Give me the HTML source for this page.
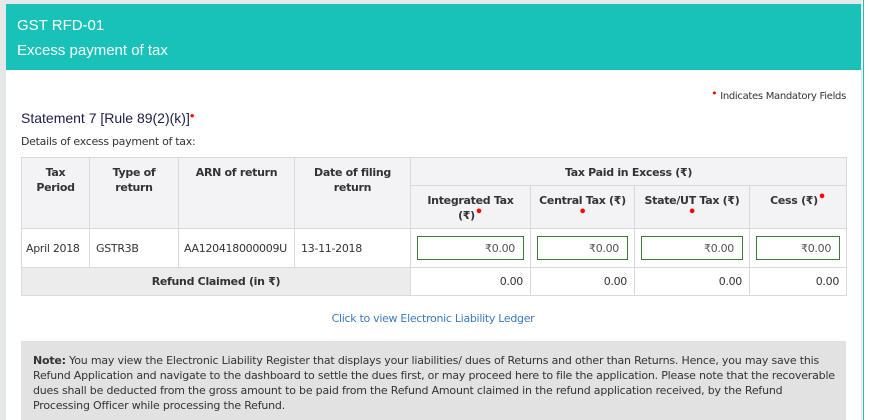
<!DOCTYPE html>
<html><head><meta charset="utf-8"><style>
*{margin:0;padding:0;box-sizing:border-box}
html,body{width:870px;height:420px;overflow:hidden}
body{background:#fff;font-family:"DejaVu Sans","Liberation Sans",sans-serif;font-size:11px;letter-spacing:-0.3px;color:#333;position:relative}
.lg{position:absolute;left:0;top:0;width:6px;height:420px;background:#e6e7e9}
.tg{position:absolute;left:0;top:0;width:862px;height:4px;background:#e6e7e9}
.rl{position:absolute;left:861px;top:0;width:1px;height:420px;background:#e6e7e9}
.tl{position:absolute;left:863px;top:0;width:1px;height:420px;background:#19c2b9}
.hd{position:absolute;left:6px;top:4px;width:855px;height:66px;background:#19c2b9;color:#fff;font-family:"Liberation Sans",sans-serif;font-size:15px;letter-spacing:0}
.hd div{position:absolute;left:11px}
.dot{color:#f00;font-size:13px;position:relative;top:-3px}
.mand{position:absolute;right:24px;top:89px;font-size:10px;color:#333}
.st{position:absolute;left:21px;top:110px;font-family:"Liberation Sans",sans-serif;font-size:14px;color:#1d1d4a;letter-spacing:0}
.det{position:absolute;left:21px;top:135px;font-size:11px}
table{position:absolute;left:21px;top:157px;border-collapse:collapse;table-layout:fixed;width:825px}
td,th{border:1px solid #d9d9d9;font-size:11px;white-space:nowrap}
th{background:#f3f3f5;font-weight:bold;text-align:center;vertical-align:top;padding-top:7px;line-height:15px;color:#333}
td{height:39px;padding:0 6px}
.inp{height:24px;border:1px solid #3c7a3c;text-align:right;padding:5px 8px 0 0;color:#555}
.num{text-align:right;padding-right:7px}
.tot td{height:28px}
.link{position:absolute;left:0;width:866px;text-align:center;top:312px;color:#3a7bbf}
.note{position:absolute;left:21px;top:341px;width:825px;height:79px;background:#e2e2e2;padding:12px 0 0 12px;line-height:15px;color:#333;white-space:nowrap;letter-spacing:-0.2px}
</style></head><body>
<div class="lg"></div><div class="tg"></div><div class="rl"></div><div class="tl"></div>
<div class="hd"><div style="top:13px">GST RFD-01</div><div style="top:38px">Excess payment of tax</div></div>
<div class="mand"><span class="dot" style="font-size:11px;top:-2px">•</span> Indicates Mandatory Fields</div>
<div class="st">Statement 7 [Rule 89(2)(k)]<span class="dot">•</span></div>
<div class="det">Details of excess payment of tax:</div>
<table>
<colgroup><col style="width:68px"><col style="width:89px"><col style="width:116px"><col style="width:116px"><col style="width:120px"><col style="width:104px"><col style="width:115px"><col style="width:97px"></colgroup>
<tr style="height:28px"><th rowspan="2" style="height:71px">Tax<br>Period</th><th rowspan="2">Type of<br>return</th><th rowspan="2">ARN of return</th><th rowspan="2">Date of filing<br>return</th><th colspan="4" style="height:28px">Tax Paid in Excess (₹)</th></tr>
<tr style="height:43px"><th>Integrated Tax<br>(₹)<span class="dot">•</span></th><th>Central Tax (₹)<br><span class="dot">•</span></th><th>State/UT Tax (₹)<br><span class="dot">•</span></th><th>Cess (₹)<span class="dot">•</span></th></tr>
<tr><td style="padding:0 4px">April 2018</td><td>GSTR3B</td><td style="padding:0 5px">AA120418000009U</td><td>13-11-2018</td>
<td><div class="inp">₹0.00</div></td><td><div class="inp">₹0.00</div></td><td><div class="inp">₹0.00</div></td><td><div class="inp">₹0.00</div></td></tr>
<tr class="tot"><td colspan="4" style="background:#ececec;text-align:center;font-weight:bold">Refund Claimed (in ₹)</td><td class="num">0.00</td><td class="num">0.00</td><td class="num">0.00</td><td class="num">0.00</td></tr>
</table>
<div class="link">Click to view Electronic Liability Ledger</div>
<div class="note"><b>Note:</b> You may view the Electronic Liability Register that displays your liabilities/ dues of Returns and other than Returns. Hence, you may save this<br>Refund Application and navigate to the dashboard to settle the dues first, or may proceed here to file the application. Please note that the recoverable<br>dues shall be deducted from the gross amount to be paid from the Refund Amount claimed in the refund application received, by the Refund<br>Processing Officer while processing the Refund.</div>
</body></html>
